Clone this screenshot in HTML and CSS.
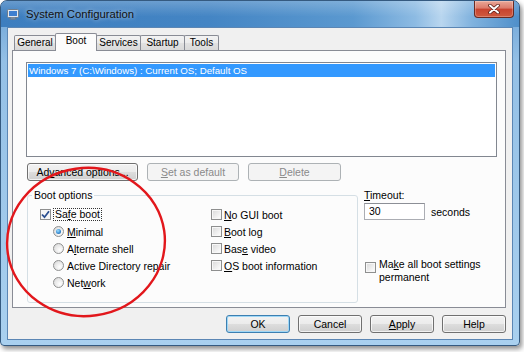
FILE: index.html
```html
<!DOCTYPE html>
<html>
<head>
<meta charset="utf-8">
<title>System Configuration</title>
<link rel="stylesheet" href="styles.css">
</head>
<body>
<div class="window">
  <div class="titlebar">
    <svg class="appicon" width="12" height="11" viewBox="0 0 12 11">
      <rect x="0.5" y="0.5" width="11" height="8" rx="1" fill="#e4e9ef" stroke="#6f7d8c"/>
      <rect x="2" y="2" width="8" height="5" fill="#3f7fcf"/>
      <rect x="4" y="8.5" width="4" height="1.5" fill="#8a96a3"/>
      <rect x="2.5" y="9.5" width="7" height="1.2" fill="#6f7d8c"/>
    </svg>
    <span class="title">System Configuration</span>
    <div class="close">
      <svg width="14" height="10" viewBox="0 0 14 10">
        <path d="M3 1.5 L11 8.5 M11 1.5 L3 8.5" stroke="#5b2019" stroke-width="3.6" stroke-linecap="round"/>
        <path d="M3 1.5 L11 8.5 M11 1.5 L3 8.5" stroke="#ffffff" stroke-width="2" stroke-linecap="round"/>
      </svg>
    </div>
  </div>
  <div class="client">
    <div class="tabs">
      <div class="tab tab-general">General</div>
      <div class="tab tab-boot active">Boot</div>
      <div class="tab tab-services">Services</div>
      <div class="tab tab-startup">Startup</div>
      <div class="tab tab-tools">Tools</div>
    </div>
    <div class="panel">
      <div class="oslist">
        <div class="osrow">Windows 7 (C:\Windows) : Current OS; Default OS</div>
      </div>
      <div class="btnrow">
        <button class="btn btn-advanced">Ad<u>v</u>anced options...</button>
        <button class="btn btn-default disabled"><u>S</u>et as default</button>
        <button class="btn btn-delete disabled"><u>D</u>elete</button>
      </div>
      <div class="lower">
        <fieldset class="group">
          <legend>Boot options</legend>
          <div class="gcols">
            <div class="col col-safe">
              <div class="row"><span class="check checked"><svg width="9" height="9" viewBox="0 0 9 9"><path d="M1 4.5 L3.5 7.2 L8 1.3" fill="none" stroke="#2b4f90" stroke-width="1.8"/></svg></span><span class="focus">Sa<u>f</u>e boot</span></div>
              <div class="row sub"><span class="radio on"></span><span><u>M</u>inimal</span></div>
              <div class="row sub"><span class="radio"></span><span>A<u>l</u>ternate shell</span></div>
              <div class="row sub"><span class="radio"></span><span>Active Directory repair</span></div>
              <div class="row sub"><span class="radio"></span><span>Net<u>w</u>ork</span></div>
            </div>
            <div class="col col-flags">
              <div class="row"><span class="check"></span><span><u>N</u>o GUI boot</span></div>
              <div class="row"><span class="check"></span><span><u>B</u>oot log</span></div>
              <div class="row"><span class="check"></span><span>Bas<u>e</u> video</span></div>
              <div class="row"><span class="check"></span><span><u>O</u>S boot information</span></div>
            </div>
          </div>
        </fieldset>
        <div class="side">
          <div class="tlabel"><u>T</u>imeout:</div>
          <div class="trow">
            <div class="tinput">30</div>
            <span>seconds</span>
          </div>
          <div class="permrow">
            <span class="check"></span>
            <span class="permtext">Ma<u>k</u>e all boot settings<br>permanent</span>
          </div>
        </div>
      </div>
    </div>
    <div class="footer">
      <button class="btn btn-foot default">OK</button>
      <button class="btn btn-foot">Cancel</button>
      <button class="btn btn-foot"><u>A</u>pply</button>
      <button class="btn btn-foot">Help</button>
    </div>
  </div>
</div>
<svg class="annot" width="524" height="352" viewBox="0 0 524 352">
  <ellipse cx="86" cy="242" rx="79" ry="74" transform="rotate(-8 86 242)" fill="none" stroke="#e2171c" stroke-width="2.4"/>
</svg>
</body>
</html>
```
FILE: styles.css
```css
body {
  margin: 0;
  width: 524px;
  height: 352px;
  overflow: hidden;
  position: relative;
  background: #ffffff;
  font-family: "Liberation Sans", Arial, sans-serif;
  font-size: 10.5px;
  color: #000;
}

.window {
  box-sizing: border-box;
  width: 520px;
  height: 346px;
  border: 1px solid #355a80;
  border-radius: 7px 7px 4px 4px;
  background: linear-gradient(to bottom, #6aa2d6 0, #94c0e6 60px, #a9d0ef 100%);
  box-shadow: 2px 3px 5px rgba(0, 0, 0, 0.45);
  display: flex;
  flex-direction: column;
  overflow: hidden;
}

.titlebar {
  height: 26px;
  flex: none;
  display: flex;
  align-items: flex-start;
  background:
    linear-gradient(to bottom, rgba(255,255,255,0.22), rgba(255,255,255,0) 60%),
    linear-gradient(to right, #3d7ebf 0%, #4485c4 40%, #5b99d0 68%, #8dbbe3 80%, #b9d6ef 85%, #80b2de 91%, #4f8fca 100%);
}

.appicon {
  margin: 8px 0 0 6px;
  flex: none;
}

.title {
  margin: 6px 0 0 7px;
  line-height: 14px;
  font-size: 11.3px;
  color: #111;
  text-shadow: 0 0 5px rgba(255,255,255,0.7);
}

.close {
  margin-left: auto;
  margin-right: 5px;
  width: 40px;
  height: 17px;
  box-sizing: border-box;
  border: 1px solid #6a2a22;
  border-top: none;
  border-radius: 0 0 4px 4px;
  background: linear-gradient(to bottom, #e9a898 0%, #db7a6a 45%, #c8432f 50%, #cf5a3f 100%);
  box-shadow: inset 0 0 0 1px rgba(255,255,255,0.25);
  display: flex;
  align-items: center;
  justify-content: center;
}

.client {
  flex: 1;
  margin: 0 6px 5px 6px;
  background: #f0f0f0;
  border: 1px solid #5b86b4;
  display: flex;
  flex-direction: column;
}

.tabs {
  display: flex;
  align-items: flex-end;
  height: 17px;
  margin-top: 5px;
  padding-left: 6px;
  position: relative;
  z-index: 1;
  font-size: 10px;
}

.tab {
  box-sizing: border-box;
  height: 15px;
  border: 1px solid #898c95;
  border-bottom: none;
  border-radius: 2px 2px 0 0;
  background: linear-gradient(to bottom, #f3f3f3 0%, #ebebeb 50%, #e1e1e1 51%, #d9d9d9 100%);
  text-align: center;
  line-height: 14px;
  margin-left: -1px;
}

.tab-general { width: 42px; margin-left: 0; }
.tab-boot { width: 42px; }
.tab-services { width: 45px; }
.tab-startup { width: 45px; }
.tab-tools { width: 35px; }

.tab.active {
  height: 18px;
  margin-bottom: -1px;
  background: #fcfcfc;
  line-height: 14px;
  position: relative;
  z-index: 2;
}

.panel {
  box-sizing: border-box;
  height: 258px;
  margin: 0 6px 0 4px;
  border: 1px solid #898c95;
  background: #fcfcfc;
  padding: 11px 8px 0 13px;
  display: flex;
  flex-direction: column;
}

.oslist {
  box-sizing: border-box;
  height: 95px;
  border: 1px solid #828790;
  background: #ffffff;
  padding: 1px;
}

.osrow {
  height: 13px;
  line-height: 13px;
  background: #3399ff;
  color: #fff;
  padding-left: 1px;
  font-size: 9.7px;
}

.btnrow {
  display: flex;
  gap: 9px;
  margin-top: 6px;
  padding-left: 1px;
}

.btn {
  box-sizing: border-box;
  height: 18px;
  padding: 0;
  border: 1px solid #707070;
  border-radius: 3px;
  background: linear-gradient(to bottom, #f2f2f2 0%, #ebebeb 50%, #dddddd 51%, #cfcfcf 100%);
  box-shadow: inset 0 0 0 1px rgba(255,255,255,0.7);
  font-family: inherit;
  font-size: 10.5px;
  line-height: 15px;
  color: #000;
  text-align: center;
}

.btn.disabled {
  border-color: #adb2b5;
  background: #f4f4f4;
  box-shadow: none;
  color: #8a8a8a;
}

.btn.default {
  border-color: #3c7fb1;
  box-shadow: inset 0 0 0 1px #9fd7f6;
}

.btn-advanced { width: 111px; }
.btn-default { width: 92px; }
.btn-delete { width: 93px; }
.btn-foot { width: 64px; }

.lower {
  display: flex;
  margin-top: 8px;
}

.group {
  box-sizing: border-box;
  width: 331px;
  height: 114px;
  margin: 0 0 0 1px;
  padding: 4px 0 0 0;
  border: 1px solid #d5dfe5;
  border-radius: 3px;
  min-width: 0;
}

.group legend {
  margin-left: 4px;
  padding: 0 2px;
  line-height: 13px;
}

.gcols {
  display: flex;
}

.col-safe {
  width: 183px;
  box-sizing: border-box;
  padding-left: 12px;
}

.row {
  height: 17px;
  display: flex;
  align-items: center;
  gap: 3px;
  white-space: nowrap;
}

.row.sub {
  margin-left: 13px;
}

.col-flags .row {
  gap: 2px;
}

.check {
  box-sizing: border-box;
  width: 11px;
  height: 11px;
  flex: none;
  border: 1px solid #8e8f8f;
  background: linear-gradient(135deg, #d8d8d8 0%, #f4f4f4 70%, #ffffff 100%);
  box-shadow: inset 0 0 0 1px #f7f7f7;
  display: flex;
  align-items: center;
  justify-content: center;
}

.check.checked {
  background: #f6f6f6;
}

.focus {
  outline: 1px dotted #333;
  outline-offset: 0;
  padding: 0 1px;
  line-height: 11px;
}

.radio {
  box-sizing: border-box;
  width: 11px;
  height: 11px;
  flex: none;
  border: 1px solid #8f9090;
  border-radius: 50%;
  background: radial-gradient(circle at 65% 65%, #ffffff 0%, #e6e6e6 60%, #cfcfcf 100%);
  display: flex;
  align-items: center;
  justify-content: center;
}

.radio.on::after {
  content: "";
  width: 5px;
  height: 5px;
  border-radius: 50%;
  background: radial-gradient(circle at 40% 35%, #9fe0ff 0%, #3a8fd6 55%, #164b86 100%);
}

.side {
  margin-left: 6px;
  display: flex;
  flex-direction: column;
}

.tlabel {
  line-height: 13px;
}

.trow {
  display: flex;
  align-items: center;
  gap: 6px;
  margin-top: 1px;
}

.tinput {
  box-sizing: border-box;
  width: 61px;
  height: 17px;
  border: 1px solid #abadb3;
  border-top-color: #8c8f96;
  background: #ffffff;
  padding-left: 4px;
  line-height: 15px;
}

.permrow {
  display: flex;
  align-items: flex-start;
  gap: 3px;
  margin-top: 38px;
  margin-left: 1px;
}

.permrow .check {
  margin-top: 4px;
}

.permtext {
  line-height: 13px;
  white-space: nowrap;
  font-kerning: none;
}

.footer {
  display: flex;
  justify-content: flex-end;
  gap: 8px;
  padding-right: 6px;
  margin-top: 7px;
}

.annot {
  position: absolute;
  left: 0;
  top: 0;
  pointer-events: none;
}
```
